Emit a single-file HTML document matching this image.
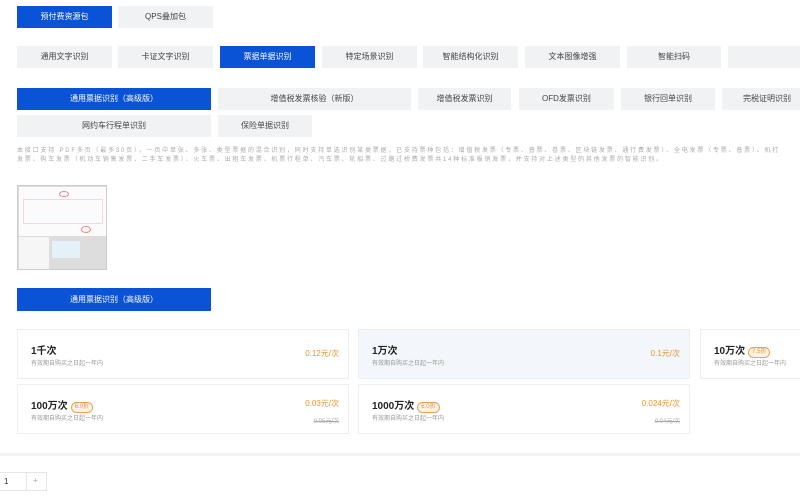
<!DOCTYPE html>
<html><head><meta charset="utf-8"><style>
*{margin:0;padding:0;box-sizing:border-box}
body{width:800px;height:500px;overflow:hidden;background:#fff;font-family:"Liberation Sans","Noto Sans CJK SC",sans-serif;position:relative;color:#333}
.b{position:absolute;height:22px;line-height:22px;text-align:center;font-size:8px;background:#f1f2f4;color:#444}
.on{background:#0a52d6;color:#fff}
.desc{position:absolute;left:17px;top:147px;width:900px;font-size:6px;line-height:9px;color:#aaa;white-space:nowrap;letter-spacing:1.8px}
.card{position:absolute;width:332px;height:50px;border:1px solid #eceef2;background:#fff}
.card .t{position:absolute;left:13px;top:12px;font-size:10px;font-weight:bold;color:#222}
.card .s{position:absolute;left:13px;top:28px;font-size:6px;color:#999}
.card .p{position:absolute;right:9px;top:18px;font-size:8px;color:#f0922e}
.card .p2{position:absolute;right:9px;top:31px;font-size:6px;color:#aaa;text-decoration:line-through}
.tag{display:inline-block;font-size:6px;font-weight:normal;color:#f0922e;border:1px solid #f0a050;background:#fff3e6;border-radius:6px;padding:0 3px;line-height:9px;margin-left:3px;vertical-align:1px}
</style></head><body>
<div class="b on" style="left:17px;top:6px;width:95px">预付费资源包</div>
<div class="b" style="left:118px;top:6px;width:95px">QPS叠加包</div>

<div class="b" style="left:17px;top:46px;width:95px">通用文字识别</div>
<div class="b" style="left:118px;top:46px;width:95px">卡证文字识别</div>
<div class="b on" style="left:220px;top:46px;width:95px">票据单据识别</div>
<div class="b" style="left:322px;top:46px;width:95px">特定场景识别</div>
<div class="b" style="left:423px;top:46px;width:95px">智能结构化识别</div>
<div class="b" style="left:525px;top:46px;width:95px">文本图像增强</div>
<div class="b" style="left:627px;top:46px;width:94px">智能扫码</div>
<div class="b" style="left:728px;top:46px;width:80px"></div>

<div class="b on" style="left:17px;top:88px;width:194px">通用票据识别（高级版）</div>
<div class="b" style="left:218px;top:88px;width:193px">增值税发票核验（新版）</div>
<div class="b" style="left:418px;top:88px;width:93px">增值税发票识别</div>
<div class="b" style="left:519px;top:88px;width:95px">OFD发票识别</div>
<div class="b" style="left:621px;top:88px;width:94px">银行回单识别</div>
<div class="b" style="left:722px;top:88px;width:90px">完税证明识别</div>
<div class="b" style="left:17px;top:115px;width:194px">网约车行程单识别</div>
<div class="b" style="left:218px;top:115px;width:94px">保险单据识别</div>

<div class="desc">本接口支持 PDF多页（最多30页），一页中单张、多张、类型票据的混合识别，同时支持单选识别某类票据，已支持票种包括：增值税发票（专票、普票、卷票、区块链发票、通行费发票）、全电发票（专票、普票）、机打<br>发票、购车发票（机动车销售发票、二手车发票）、火车票、出租车发票、机票行程单、汽车票、轮船票、过路过桥费发票共14种标准报销发票，并支持对上述类型的其他发票的智能识别。</div>

<div style="position:absolute;left:17px;top:185px;width:90px;height:85px;background:#ddd;border:1px solid #ccc">
<div style="position:absolute;left:1px;top:1px;width:87px;height:49px;background:#fbfbfb">
<div style="position:absolute;left:40px;top:4px;width:10px;height:6px;border:1px solid #e88;border-radius:50%"></div>
<div style="position:absolute;left:62px;top:39px;width:10px;height:7px;border:1px solid #e88;border-radius:50%"></div>
<div style="position:absolute;left:4px;top:12px;width:80px;height:25px;border:1px solid #f3dada"></div></div>
<div style="position:absolute;left:1px;top:51px;width:30px;height:32px;background:#f6f6f6"></div>
<div style="position:absolute;left:34px;top:55px;width:28px;height:17px;background:#e4f1f8"></div>
</div>

<div class="b on" style="left:17px;top:288px;width:194px;height:23px;line-height:23px">通用票据识别（高级版）</div>

<div class="card" style="left:17px;top:329px"><div class="t">1千次</div><div class="s">有效期自购买之日起一年内</div><div class="p">0.12元/次</div></div>
<div class="card" style="left:358px;top:329px;background:#f3f6fb"><div class="t">1万次</div><div class="s">有效期自购买之日起一年内</div><div class="p">0.1元/次</div></div>
<div class="card" style="left:700px;top:329px"><div class="t">10万次<span class="tag">7.5折</span></div><div class="s">有效期自购买之日起一年内</div></div>
<div class="card" style="left:17px;top:384px"><div class="t">100万次<span class="tag">6.0折</span></div><div class="s">有效期自购买之日起一年内</div><div class="p" style="top:13px">0.03元/次</div><div class="p2">0.05元/次</div></div>
<div class="card" style="left:358px;top:384px"><div class="t">1000万次<span class="tag">6.0折</span></div><div class="s">有效期自购买之日起一年内</div><div class="p" style="top:13px">0.024元/次</div><div class="p2">0.04元/次</div></div>

<div style="position:absolute;left:0;top:453px;width:800px;height:3px;background:#f2f3f5"></div>
<div style="position:absolute;left:-1px;top:472px;width:48px;height:19px;border:1px solid #e3e5e8;font-size:8px"><span style="position:absolute;left:4px;top:4px">1</span><div style="position:absolute;left:26px;top:0;width:1px;height:17px;background:#e3e5e8"></div><span style="position:absolute;left:33px;top:3px;color:#aaa">+</span></div>
</body></html>
